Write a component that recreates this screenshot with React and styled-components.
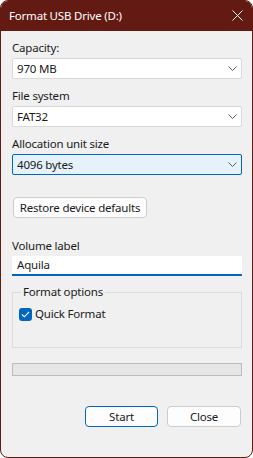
import React from "react";
import styled, { createGlobalStyle } from "styled-components";

const Global = createGlobalStyle`
  html, body { margin: 0; padding: 0; background: #ffffff; }
  body {
    font-family: "Noto Sans", "Open Sans", sans-serif;
    font-size: 11.5px;
    letter-spacing: -0.2px;
    color: #1a1a1a;
  }
  * { box-sizing: border-box; }
`;

const Window = styled.div`
  width: 253px;
  height: 458px;
  border: 1px solid #621a13;
  border-radius: 8px;
  overflow: hidden;
  background: #f0f0f0;
  display: flex;
  flex-direction: column;
`;

const TitleBar = styled.div`
  height: 30px;
  flex: none;
  background: #621a13;
  display: flex;
  align-items: center;
  justify-content: space-between;
  padding: 0 9px 0 8px;
  color: #ffffff;
`;

const Title = styled.span`
  line-height: 16px;
  margin-top: -1px;
`;

const CloseIcon = styled.svg`
  width: 11px;
  height: 11px;
  margin-top: -2px;
`;

const Body = styled.div`
  flex: 1;
  display: flex;
  flex-direction: column;
  padding: 9px 10px 0 11px;
`;

const Field = styled.div`
  display: flex;
  flex-direction: column;
  gap: 2px;
  margin-bottom: ${(p) => p.$mb ?? 9}px;
`;

const Label = styled.div`
  line-height: 16px;
  height: 16px;
`;

const Combo = styled.div`
  height: 21px;
  border: 1px solid ${(p) => (p.$focused ? "#0067c0" : "#d9d9d9")};
  border-radius: 2px;
  background: ${(p) => (p.$focused ? "#e5f1fb" : "#ffffff")};
  display: flex;
  align-items: center;
  justify-content: space-between;
  padding: 0 4px 0 4px;
  line-height: 16px;
`;

const Chevron = styled.svg`
  width: 9px;
  height: 5px;
`;

const Button = styled.button`
  height: 21px;
  width: ${(p) => p.$w}px;
  border: 1px solid ${(p) => (p.$primary ? "#0067c0" : "#cccccc")};
  border-radius: 4px;
  background: #fdfdfd;
  font: inherit;
  letter-spacing: inherit;
  color: #1a1a1a;
  padding: 0;
  line-height: 16px;
`;

const RestoreRow = styled.div`
  display: flex;
  padding-left: 1px;
  margin: 13px 0 20px;
`;

const TextInput = styled.div`
  height: 20px;
  background: #ffffff;
  border-bottom: 2px solid #0067c0;
  padding: 1px 5px 0;
  line-height: 16px;
`;

const GroupBox = styled.fieldset`
  margin: 0;
  height: 64px;
  border: 1px solid #dcdcdc;
  padding: 6px 5px 0 6px;
`;

const Legend = styled.legend`
  padding: 0 2px;
  line-height: 16px;
  margin-left: 2px;
`;

const CheckRow = styled.div`
  display: flex;
  align-items: center;
  gap: 3px;
  line-height: 16px;
`;

const CheckBox = styled.div`
  width: 13px;
  height: 13px;
  border-radius: 3px;
  background: #0067c0;
  display: flex;
  align-items: center;
  justify-content: center;
`;

const Progress = styled.div`
  height: 13px;
  margin-top: 15px;
  background: #e6e6e6;
  border: 1px solid #bcbcbc;
`;

const Footer = styled.div`
  display: flex;
  justify-content: flex-end;
  gap: 9px;
  margin-top: 30px;
  padding-right: 1px;
`;

const ComboField = ({ label, value, focused }) => (
  <Field>
    <Label>{label}</Label>
    <Combo $focused={focused}>
      <span>{value}</span>
      <Chevron viewBox="0 0 9 5">
        <path d="M0.5 0.5 L4.5 4.5 L8.5 0.5" fill="none" stroke="#5a5a5a" strokeWidth="1" />
      </Chevron>
    </Combo>
  </Field>
);

export default function App() {
  return (
    <>
      <Global />
      <Window>
        <TitleBar>
          <Title>Format USB Drive (D:)</Title>
          <CloseIcon viewBox="0 0 11 11">
            <path d="M0.5 0.5 L10.5 10.5 M10.5 0.5 L0.5 10.5" stroke="#ffffff" strokeWidth="1" />
          </CloseIcon>
        </TitleBar>
        <Body>
          <ComboField label="Capacity:" value="970 MB" />
          <ComboField label="File system" value="FAT32" />
          <ComboField label="Allocation unit size" value="4096 bytes" focused />
          <RestoreRow>
            <Button $w={134}>Restore device defaults</Button>
          </RestoreRow>
          <Field $mb={8}>
            <Label>Volume label</Label>
            <TextInput>Aquila</TextInput>
          </Field>
          <GroupBox>
            <Legend>Format options</Legend>
            <CheckRow>
              <CheckBox>
                <svg width="9" height="7" viewBox="0 0 9 7">
                  <path d="M1 3.5 L3.3 5.8 L8 1" fill="none" stroke="#ffffff" strokeWidth="1.1" />
                </svg>
              </CheckBox>
              <span>Quick Format</span>
            </CheckRow>
          </GroupBox>
          <Progress />
          <Footer>
            <Button $w={73} $primary>Start</Button>
            <Button $w={74}>Close</Button>
          </Footer>
        </Body>
      </Window>
    </>
  );
}
